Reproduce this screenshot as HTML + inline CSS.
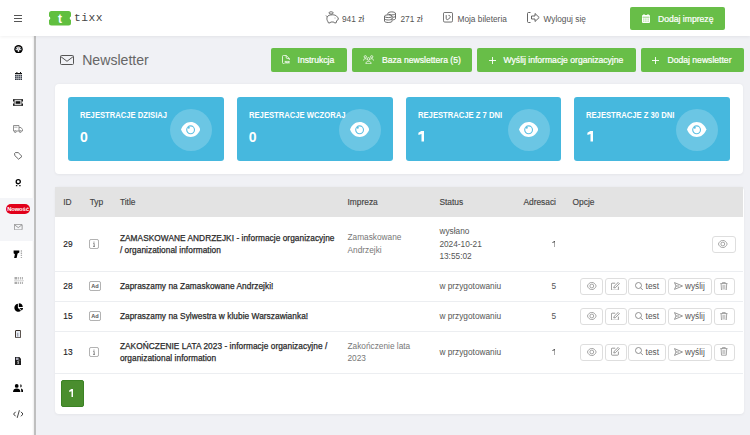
<!DOCTYPE html>
<html><head><meta charset="utf-8">
<style>
*{box-sizing:border-box;margin:0;padding:0}
html,body{width:750px;height:435px;overflow:hidden;background:#f0f1f5;font-family:"Liberation Sans",sans-serif;color:#333}
.abs{position:absolute}
#top{position:absolute;left:0;top:0;width:750px;height:36px;background:#fff;box-shadow:0 1px 3px rgba(0,0,0,.06);z-index:3}
#side{position:absolute;left:0;top:36px;width:36px;height:399px;background:#fff;border-right:2px solid #bfbfbf;box-shadow:inset -2px 0 2px -1px rgba(0,0,0,.07);z-index:2}
.gbtn{position:absolute;background:#68be48;border-radius:2px;color:#fff;font-weight:normal;font-size:8.6px;-webkit-text-stroke:.22px #fff;white-space:nowrap}
.gbtn span{position:absolute;top:.8px;line-height:23px}
.tnav{position:absolute;font-size:8.3px;color:#555;white-space:nowrap;line-height:10px}
.card{position:absolute;background:#fff;border-radius:4px;box-shadow:0 .5px 2.5px rgba(0,0,0,.05)}
.stat{position:absolute;top:13px;width:155.8px;height:64px;background:#46b8de;border-radius:3px;color:#fff}
.stat .l{position:absolute;left:12px;top:13px;font-size:8.6px;font-weight:bold;white-space:nowrap;transform:scaleX(.89);transform-origin:0 0}
.stat .v{position:absolute;left:12px;top:32px;font-size:14px;font-weight:bold}
.stat .c{position:absolute;left:102px;top:12px;width:42px;height:42px;border-radius:50%;background:rgba(255,255,255,.2)}
.stat svg{position:absolute;left:11px;top:13px}
.th{position:absolute;top:.5px;line-height:29px;font-size:8.4px;color:#444;-webkit-text-stroke:.15px #444;white-space:nowrap}
.td{position:absolute;font-size:8.3px;color:#555;white-space:nowrap;line-height:12.4px}
.tt{position:absolute;font-size:8.3px;color:#2a2a2a;-webkit-text-stroke:.25px #2a2a2a;letter-spacing:.05px;white-space:nowrap;line-height:12.4px}
.hr{position:absolute;left:0;width:688px;height:1px;background:#eceef1}
.ob{position:absolute;height:17px;border:1px solid #dedede;border-radius:3px;background:#fff;font-size:8.3px;color:#555;white-space:nowrap}
.ob svg{position:absolute}
.ob span{position:absolute;line-height:15px}
.si{position:absolute;left:0;width:34px}
</style></head><body>

<div id="top">
  <!-- hamburger -->
  <div class="abs" style="left:14px;top:14.5px;width:8px;height:1.2px;background:#555"></div>
  <div class="abs" style="left:14px;top:17.5px;width:8px;height:1.2px;background:#555"></div>
  <div class="abs" style="left:14px;top:20.5px;width:8px;height:1.2px;background:#555"></div>
  <!-- logo -->
  <svg class="abs" style="left:49px;top:11px" width="22" height="14.5" viewBox="0 0 22 14.5">
    <path d="M2.5 0H19.5A2.5 2.5 0 0 1 22 2.5V5.6A1.7 1.7 0 0 0 22 8.9V12A2.5 2.5 0 0 1 19.5 14.5H2.5A2.5 2.5 0 0 1 0 12V8.9A1.7 1.7 0 0 0 0 5.6V2.5A2.5 2.5 0 0 1 2.5 0Z" fill="#60bf3f"/>
    <text x="10.9" y="11.6" font-family="Liberation Sans" font-weight="bold" font-size="12" fill="#fff" text-anchor="middle">t</text>
  </svg>
  <div class="abs" style="left:74px;top:10.5px;font-family:'Liberation Mono',monospace;font-size:11.3px;letter-spacing:.45px;color:#444;line-height:15px">tixx</div>

  <!-- nav -->
  <svg class="abs" style="left:324.5px;top:10.5px" width="14" height="13" viewBox="0 0 14 13" fill="none" stroke="#555" stroke-width=".85">
    <path d="M2.2 5.8C3 4.5 5 3.8 7.4 3.8C9.4 3.8 10.8 4.3 11.6 5.3L13.2 6.7V8.6L11.8 9.5L11.1 11.9H9.4L8.8 11H5.7L5.1 11.9H3.4L2.7 10.1C1.9 9.2 1.6 7.6 2.2 5.8ZM2.2 5.8L1 4.5"/>
    <ellipse cx="6.1" cy="1.9" rx="2.1" ry="1.15"/>
    <circle cx="10" cy="7" r=".45" fill="#555" stroke="none"/>
  </svg>
  <div class="tnav" style="left:342px;top:13.5px">941 zł</div>
  <svg class="abs" style="left:384px;top:11px" width="12" height="12" viewBox="0 0 12 12" fill="none" stroke="#555" stroke-width=".85">
    <path d="M3.9 2.4C3.9 1.6 5.6 .9 7.7 .9S11.5 1.6 11.5 2.4 9.8 3.9 7.7 3.9C6.6 3.9 5.6 3.7 5 3.4M11.5 2.4V7.6C11.5 8.2 10.5 8.7 8.9 8.9M11.5 5C11.5 5.6 10.5 6.1 8.9 6.3M3.9 2.4V3.6"/>
    <ellipse cx="4.3" cy="5.2" rx="3.8" ry="1.4"/><path d="M.5 5.2V10.1C.5 10.9 2.2 11.5 4.3 11.5S8.1 10.9 8.1 10.1V5.2M.5 7.6C.5 8.4 2.2 9 4.3 9S8.1 8.4 8.1 7.6"/>
  </svg>
  <div class="tnav" style="left:400.5px;top:13.5px">271 zł</div>
  <svg class="abs" style="left:443px;top:12px" width="10" height="10.5" viewBox="0 0 10 10.5" fill="none" stroke="#555" stroke-width=".85">
    <rect x=".45" y=".45" width="9.1" height="9.6" rx="1.3"/><path d="M3.2 3.1V6.2C3 7.6 4.2 8 5 7.4L7.1 5.7C7.7 4.6 7 3.3 5.5 3.4"/>
  </svg>
  <div class="tnav" style="left:457.5px;top:13.5px">Moja bileteria</div>
  <svg class="abs" style="left:527px;top:11.5px" width="13" height="11" viewBox="0 0 13 11" fill="none" stroke="#555" stroke-width="0.9">
    <path d="M3.5 .5H1.5A1 1 0 0 0 .5 1.5V9.5A1 1 0 0 0 1.5 10.5H3.5"/><path d="M4.5 4H8V1.5L12.2 5.5L8 9.5V7H4.5Z"/>
  </svg>
  <div class="tnav" style="left:543.5px;top:13.5px">Wyloguj się</div>

  <div class="gbtn" style="left:630px;top:6.5px;width:94.5px;height:23.5px">
    <svg class="abs" style="left:12px;top:7.5px" width="8" height="9" viewBox="0 0 8 9"><path d="M1.5 0H2.5V1H5.5V0H6.5V1H7A1 1 0 0 1 8 2V8A1 1 0 0 1 7 9H1A1 1 0 0 1 0 8V2A1 1 0 0 1 1 1H1.5Z" fill="#fff"/><path d="M.5 3.2H7.5" stroke="#68be48" stroke-width=".7"/><path d="M1 5.1H7M1 7.1H7" stroke="#68be48" stroke-width=".6" stroke-dasharray="1.2 .5"/></svg>
    <span style="left:28px;line-height:24px">Dodaj imprezę</span>
  </div>
</div>

<div id="side">
  <!-- gauge -->
  <svg class="abs" style="left:13.8px;top:8.7px" width="9" height="8.4" viewBox="0 0 9 8.4"><circle cx="4.5" cy="4.2" r="4.2" fill="#000"/><path d="M1.6 4.4A2.9 2.9 0 0 1 7.4 4.4V5.2H1.6Z" fill="#e6e6e6"/><circle cx="2.3" cy="3.6" r=".65" fill="#123"/><circle cx="6.7" cy="3.6" r=".65" fill="#123"/><circle cx="3.1" cy="2.1" r=".5" fill="#543"/><circle cx="5.9" cy="2.1" r=".5" fill="#321"/><path d="M4.2 6.2L4.3 1.2H4.7L4.8 6.2Z" fill="#889"/><path d="M1.5 5.2Q4.5 7.6 7.5 5.2V6.4H1.5Z" fill="#000"/><circle cx="4.5" cy="5.9" r=".85" fill="#fff"/></svg>
  <!-- calendar -->
  <svg class="abs" style="left:14.6px;top:35.6px" width="7.4" height="8.2" viewBox="0 0 7.4 8.2"><path d="M1.4 0H2.4V1H5V0H6V1H7.4V2.3H0V1H1.4Z" fill="#111"/><rect x="0" y="2.9" width="7.4" height="5.3" rx=".4" fill="#2c3442"/><path d="M1.85 2.9V8.2M3.7 2.9V8.2M5.55 2.9V8.2M0 4.65H7.4M0 6.45H7.4" stroke="#e8e8e8" stroke-width=".55"/></svg>
  <!-- ticket -->
  <svg class="abs" style="left:13.4px;top:62.9px" width="10" height="7" viewBox="0 0 10 7"><path d="M0 0H10V2.6A.9.9 0 0 0 10 4.4V7H0V4.4A.9.9 0 0 0 0 2.6Z" fill="#555"/><circle cx=".9" cy="1.2" r=".8" fill="#000"/><circle cx=".9" cy="5.8" r=".8" fill="#000"/><circle cx="9.1" cy="1.2" r=".8" fill="#000"/><circle cx="9.1" cy="5.8" r=".8" fill="#000"/><rect x="1.6" y="1" width="6.8" height="5" fill="#d0d0d0"/><rect x="2.7" y="2.2" width="4.6" height="2.6" rx=".3" fill="#111"/></svg>
  <!-- truck -->
  <svg class="abs" style="left:13.4px;top:89.4px" width="10" height="8" viewBox="0 0 10 8" fill="none" stroke="#777" stroke-width=".8"><path d="M.5 .5H6V6H.5Z"/><path d="M6 2.5H8L9.5 4.5V6H6"/><circle cx="2.3" cy="6.7" r=".9" fill="#fff"/><circle cx="7.3" cy="6.7" r=".9" fill="#fff"/><path d="M1.2 2.2H4.5" stroke="#999"/></svg>
  <!-- tag -->
  <svg class="abs" style="left:13.9px;top:116.1px" width="8.5" height="7.5" viewBox="0 0 8.5 7.5" fill="none" stroke="#444" stroke-width=".8"><path d="M.6 1.4L1.4 .6L4.2 .6L8 4.4L4.6 7.2L.8 3.6Z"/></svg>
  <!-- award person -->
  <svg class="abs" style="left:14.9px;top:143px" width="6.5" height="7.5" viewBox="0 0 6.5 7.5"><circle cx="3.25" cy="2.7" r="2.05" fill="none" stroke="#000" stroke-width="1.3"/><path d="M.9 6.7H2.3M4.2 6.7H5.6" stroke="#111" stroke-width="1.2"/></svg>
  <!-- active item -->
  <div class="abs" style="left:0;top:162px;width:34px;height:42.7px;background:#f4f5f8"></div>
  <div class="abs" style="left:5.8px;top:167.8px;width:24.4px;height:10.3px;border-radius:5.2px;background:#e1001a;color:#fff;font-size:5.9px;font-weight:bold;line-height:10.3px;text-align:center;letter-spacing:-.15px">Nowość</div>
  <svg class="abs" style="left:14px;top:188px" width="8.5" height="6.3" viewBox="0 0 8.5 6.3" fill="none" stroke="#777" stroke-width=".7"><rect x=".35" y=".35" width="7.8" height="5.6" rx=".6"/><path d="M.6 .9L4.25 3.6L7.9 .9"/></svg>
  <!-- gun/registers -->
  <svg class="abs" style="left:13px;top:213.9px" width="10" height="8.2" viewBox="0 0 10 8.2"><path d="M.6 .5H6.3V2.6L4.6 3.6L3.6 7.9H1.1L1.9 4.3L.6 3.2Z" fill="#000"/><path d="M8.4 .3V8" stroke="#aaa" stroke-width="1.3" stroke-dasharray="1.4 .8"/></svg>
  <!-- barcode -->
  <svg class="abs" style="left:13.5px;top:241px" width="10" height="7.4" viewBox="0 0 10 7.4"><path d="M.5 0H3.3V2.6H.5ZM4.2 0H5.1V2.6H4.2ZM6.1 0H7.2V2.6H6.1ZM8.1 0H9V2.6H8.1ZM.5 4.8H3.3V7.4H.5ZM4.2 4.8H5.1V7.4H4.2ZM6.1 4.8H7.2V7.4H6.1ZM8.1 4.8H9V7.4H8.1Z" fill="#aaa"/><path d="M0 3.7H10" stroke="#bbb" stroke-width=".6"/></svg>
  <!-- pie -->
  <svg class="abs" style="left:13.9px;top:267px" width="9.4" height="8.6" viewBox="0 0 9.4 8.6"><path d="M3.9 .8A4 4 0 1 0 7 7.8L4.3 5.2A.8.8 0 0 1 3.9 4.6Z" fill="#000"/><path d="M4.8 .2A4 4 0 0 1 8.8 4H4.8Z" fill="#000"/><path d="M5.4 5H9.2A4.3 4.3 0 0 1 7.7 7.4Z" fill="#111"/></svg>
  <!-- calculator -->
  <svg class="abs" style="left:14.8px;top:294px" width="6.2" height="8.3" viewBox="0 0 6.2 8.3"><rect x=".5" y=".5" width="5.2" height="7.3" rx=".4" fill="#e8eef4" stroke="#3a2f28" stroke-width="1"/><path d="M2.8 2.8V6.6" stroke="#889" stroke-width="1"/></svg>
  <!-- file dollar -->
  <svg class="abs" style="left:14.8px;top:320.7px" width="6.2" height="8.2" viewBox="0 0 6.2 8.2"><path d="M0 0H4.3L6.2 1.9V8.2H0Z" fill="#1a1a1a"/><path d="M.9 .6H3.6V3H.9Z" fill="#aab"/><path d="M4.2 3.2H5.5" stroke="#999" stroke-width=".6"/><path d="M3.9 4.2C3.5 3.9 2.5 4 2.5 4.6S3.9 5.2 3.9 5.9 3 6.6 2.4 6.3M3.15 3.6V7.1" stroke="#ddd" stroke-width=".6" fill="none"/></svg>
  <!-- users -->
  <svg class="abs" style="left:13px;top:347.7px" width="10.3" height="8.1" viewBox="0 0 10.3 8.1"><circle cx="3.7" cy="1.9" r="1.9" fill="#000"/><path d="M0 8.1C0 5.5 1.5 4.4 3.7 4.4S7.4 5.5 7.4 8.1Z" fill="#000"/><path d="M7.4 .3A1.7 1.7 0 0 1 7.4 3.6Z" fill="#000"/><path d="M7.9 4.6C9.3 4.9 10.3 6 10.3 8.1H8.3C8.3 6.5 8.2 5.4 7.9 4.6Z" fill="#000"/></svg>
  <!-- code -->
  <svg class="abs" style="left:12.8px;top:374.3px" width="10.6" height="8.1" viewBox="0 0 10.6 8.1" fill="none" stroke="#222" stroke-width=".9"><path d="M2.6 1.8L.6 4.05L2.6 6.3M8 1.8L10 4.05L8 6.3"/><path d="M6.4 .2L4.2 7.9" stroke="#333"/></svg>
</div>

<!-- Title -->
<svg class="abs" style="left:60px;top:55px" width="14" height="10" viewBox="0 0 14 10" fill="none" stroke="#555" stroke-width="1">
  <rect x=".5" y=".5" width="13" height="9" rx="1"/><path d="M.8 1.6L7 6.3L13.2 1.6"/>
</svg>
<div class="abs" style="left:82.2px;top:51.6px;font-size:14.1px;letter-spacing:0;color:#666;line-height:17px;white-space:nowrap">Newsletter</div>

<div class="gbtn" style="left:270.5px;top:48px;width:76px;height:23.5px">
  <svg class="abs" style="left:11.3px;top:7px" width="8.2" height="9" viewBox="0 0 8.2 9" fill="none" stroke="#fff" stroke-width=".8"><path d="M4.2.4H1.6A1.1 1.1 0 0 0 .5 1.5V7.5A1.1 1.1 0 0 0 1.6 8.6H2.4M4.2.4L7.3 3.5V5M4.2.4V2.3A1.2 1.2 0 0 0 5.4 3.5H7.3"/><path d="M2.6 5.9H7.8V8.5H2.6Z" fill="#fff" fill-opacity=".55" stroke="none"/><path d="M3 6.6H4.1V8M4.8 6.6V8H5.6M6.3 8V6.6H7.4M6.3 7.3H7" stroke="#fff" stroke-width=".45"/></svg>
  <span style="left:27px">Instrukcja</span>
</div>
<div class="gbtn" style="left:351.5px;top:48px;width:120.5px;height:23.5px">
  <svg class="abs" style="left:11.3px;top:6.8px" width="11" height="9.2" viewBox="0 0 11 9.2" fill="none" stroke="#fff" stroke-width=".75"><circle cx="5.5" cy="3.9" r="1.3"/><path d="M2.9 8.8C2.9 7 4 6.3 5.5 6.3S8.1 7 8.1 8.8Z"/><circle cx="2.3" cy="1.8" r="1.15"/><circle cx="8.7" cy="1.8" r="1.15"/><path d="M.4 5.6C.6 4.4 1.3 3.7 2.3 3.7S3.5 4 3.9 4.5M10.6 5.6C10.4 4.4 9.7 3.7 8.7 3.7S7.5 4 7.1 4.5"/></svg>
  <span style="left:30.5px">Baza newslettera (5)</span>
</div>
<div class="gbtn" style="left:476.5px;top:48px;width:159px;height:23.5px">
  <svg class="abs" style="left:12px;top:8.5px" width="7" height="7" viewBox="0 0 7 7" stroke="#fff" stroke-width=".9"><path d="M3.5 0V7M0 3.5H7"/></svg>
  <span style="left:27px">Wyślij informacje organizacyjne</span>
</div>
<div class="gbtn" style="left:640.5px;top:48px;width:103px;height:23.5px">
  <svg class="abs" style="left:11.5px;top:8.5px" width="7" height="7" viewBox="0 0 7 7" stroke="#fff" stroke-width=".9"><path d="M3.5 0V7M0 3.5H7"/></svg>
  <span style="left:27px">Dodaj newsletter</span>
</div>

<!-- stats card -->
<div class="card" style="left:55px;top:84px;width:688px;height:90px">
  <div class="stat" style="left:13px"><div class="l">REJESTRACJE DZISIAJ</div><div class="v">0</div><div class="c"><svg width="19.4" height="15" viewBox="0 0 19.4 15"><path d="M0 7.5C2 2.7 5.4 0 9.7 0S17.4 2.7 19.4 7.5C17.4 12.3 14 15 9.7 15S2 12.3 0 7.5Z" fill="#fff"/><circle cx="9.6" cy="7.8" r="3.9" fill="none" stroke="#5ec0e3" stroke-width="1.1"/><circle cx="7.8" cy="5.7" r="1" fill="#5ec0e3"/></svg></div></div>
  <div class="stat" style="left:181.8px"><div class="l">REJESTRACJE WCZORAJ</div><div class="v">0</div><div class="c"><svg width="19.4" height="15" viewBox="0 0 19.4 15"><path d="M0 7.5C2 2.7 5.4 0 9.7 0S17.4 2.7 19.4 7.5C17.4 12.3 14 15 9.7 15S2 12.3 0 7.5Z" fill="#fff"/><circle cx="9.6" cy="7.8" r="3.9" fill="none" stroke="#5ec0e3" stroke-width="1.1"/><circle cx="7.8" cy="5.7" r="1" fill="#5ec0e3"/></svg></div></div>
  <div class="stat" style="left:350.6px"><div class="l">REJESTRACJE Z 7 DNI</div><svg class="abs" style="left:12.4px;top:34.3px" width="6" height="10.6" viewBox="0 0 6 10.6"><path d="M3.5 0H6V10.6H3.5V2.9L.4 3.9V1.8L3.3 0Z" fill="#fff"/></svg><div class="c"><svg width="19.4" height="15" viewBox="0 0 19.4 15"><path d="M0 7.5C2 2.7 5.4 0 9.7 0S17.4 2.7 19.4 7.5C17.4 12.3 14 15 9.7 15S2 12.3 0 7.5Z" fill="#fff"/><circle cx="9.6" cy="7.8" r="3.9" fill="none" stroke="#5ec0e3" stroke-width="1.1"/><circle cx="7.8" cy="5.7" r="1" fill="#5ec0e3"/></svg></div></div>
  <div class="stat" style="left:519.4px"><div class="l">REJESTRACJE Z 30 DNI</div><svg class="abs" style="left:12.4px;top:34.3px" width="6" height="10.6" viewBox="0 0 6 10.6"><path d="M3.5 0H6V10.6H3.5V2.9L.4 3.9V1.8L3.3 0Z" fill="#fff"/></svg><div class="c"><svg width="19.4" height="15" viewBox="0 0 19.4 15"><path d="M0 7.5C2 2.7 5.4 0 9.7 0S17.4 2.7 19.4 7.5C17.4 12.3 14 15 9.7 15S2 12.3 0 7.5Z" fill="#fff"/><circle cx="9.6" cy="7.8" r="3.9" fill="none" stroke="#5ec0e3" stroke-width="1.1"/><circle cx="7.8" cy="5.7" r="1" fill="#5ec0e3"/></svg></div></div>
</div>

<!-- table card -->
<div class="card" id="tbl" style="left:55px;top:187px;width:688.5px;height:226.8px">
  <div class="abs" style="left:0;top:0;width:688px;height:29.5px;background:#e3e3e3"></div>
  <div class="th" style="left:8.3px">ID</div>
  <div class="th" style="left:34.7px">Typ</div>
  <div class="th" style="left:64.9px">Title</div>
  <div class="th" style="left:292.5px">Impreza</div>
  <div class="th" style="left:384.4px">Status</div>
  <div class="th" style="left:468.4px">Adresaci</div>
  <div class="th" style="left:517.6px">Opcje</div>

  <div class="hr" style="top:84px"></div>
  <div class="hr" style="top:113.6px"></div>
  <div class="hr" style="top:144px"></div>
  <div class="hr" style="top:185.6px"></div>

  <div class="td" style="left:8.3px;top:50.8px;color:#222;-webkit-text-stroke:.15px #222">29</div>
  <svg class="abs" style="left:34px;top:51.8px" width="10" height="10" viewBox="0 0 10 10"><rect x=".45" y=".45" width="9.1" height="9.1" rx="1.6" fill="none" stroke="#999" stroke-width=".8"/><circle cx="5" cy="3" r=".55" fill="#777"/><path d="M4.2 4.4H5.2V7.3M4 7.4H6" stroke="#666" stroke-width=".75" fill="none"/></svg>
  <div class="tt" style="left:64.9px;top:44.5px">ZAMASKOWANE ANDRZEJKI - informacje organizacyjne<br>/ organizational information</div>
  <div class="td" style="left:292.5px;top:44.3px;color:#777">Zamaskowane<br>Andrzejki</div>
  <div class="td" style="left:384.4px;top:38.4px">wysłano<br>2024-10-21<br>13:55:02</div>
  <svg class="abs" style="left:496.8px;top:53.8px" width="3.4" height="6.2" viewBox="0 0 3.4 6.2"><path d="M2.5 0H3.4V6.2H2.5V1.2L.3 2V1.2L2.3 0Z" fill="#555"/></svg>
  <div class="ob" style="left:657px;top:49px;width:23.6px"><div class="abs" style="left:5.4px;top:3.2px"><svg width="9.6" height="8" viewBox="0 0 9.6 8" fill="none" stroke="#777" stroke-width=".65"><path d="M.4 4C1.3 1.7 2.9.4 4.8.4S8.3 1.7 9.2 4C8.3 6.3 6.7 7.6 4.8 7.6S1.3 6.3.4 4Z"/><circle cx="4.8" cy="4" r="1.9"/></svg></div></div>

  <div class="td" style="left:8.3px;top:92.8px;color:#222;-webkit-text-stroke:.15px #222">28</div>
  <svg class="abs" style="left:34px;top:94.1px" width="12" height="10" viewBox="0 0 12 10"><rect x=".45" y=".45" width="11.1" height="9.1" rx="1.6" fill="none" stroke="#999" stroke-width=".8"/><text x="6" y="7.2" text-anchor="middle" font-family="Liberation Sans" font-size="5.6" font-weight="bold" fill="#555">Ad</text></svg>
  <div class="tt" style="left:64.9px;top:92.8px">Zapraszamy na Zamaskowane Andrzejki!</div>
  <div class="td" style="left:384.4px;top:92.8px">w przygotowaniu</div>
  <div class="td" style="left:450px;width:51px;text-align:right;top:92.8px">5</div>
  <div class="ob" style="left:525.4px;top:91.2px;width:22.8px"><div class="abs" style="left:5.8px;top:2.8px"><svg width="9.6" height="8" viewBox="0 0 9.6 8" fill="none" stroke="#777" stroke-width=".65"><path d="M.4 4C1.3 1.7 2.9.4 4.8.4S8.3 1.7 9.2 4C8.3 6.3 6.7 7.6 4.8 7.6S1.3 6.3.4 4Z"/><circle cx="4.8" cy="4" r="1.9"/></svg></div></div><div class="ob" style="left:550px;top:91.2px;width:21.8px"><div class="abs" style="left:5.4px;top:2.6px"><svg width="9" height="8.6" viewBox="0 0 9 8.6" fill="none" stroke="#777" stroke-width=".75"><path d="M4.2 1.2H1.2A.8.8 0 0 0 .4 2V7.4A.8.8 0 0 0 1.2 8.2H6.6A.8.8 0 0 0 7.4 7.4V4.6"/><path d="M7.2.5L8.4 1.7L4.4 5.7L2.8 6L3.1 4.4Z"/></svg></div></div><div class="ob" style="left:573.4px;top:91.2px;width:37.4px"><div class="abs" style="left:5.6px;top:2.6px"><svg width="8.4" height="8.6" viewBox="0 0 8.4 8.6" fill="none" stroke="#777" stroke-width=".8"><circle cx="3.5" cy="3.5" r="3"/><path d="M5.7 5.8L8 8.2"/></svg></div><span style="left:16.2px">test</span></div><div class="ob" style="left:613.2px;top:91.2px;width:43.8px"><div class="abs" style="left:5px;top:3px"><svg width="9" height="8" viewBox="0 0 9 8" fill="none" stroke="#777" stroke-width=".75"><path d="M.5 .6L8.5 4L.5 7.4L2 4Z"/><path d="M2 4H5"/></svg></div><span style="left:15.8px">wyślij</span></div><div class="ob" style="left:659px;top:91.2px;width:20.9px"><div class="abs" style="left:5.4px;top:2.6px"><svg width="7.8" height="8.6" viewBox="0 0 7.8 8.6" fill="none" stroke="#888" stroke-width=".75"><path d="M.3 1.6H7.5M2.6 1.6V.4H5.2V1.6M1.1 1.6L1.5 8.2H6.3L6.7 1.6"/><path d="M2.9 3V7M3.9 3V7M4.9 3V7" stroke-width=".5"/></svg></div></div>

  <div class="td" style="left:8.3px;top:122.8px;color:#222;-webkit-text-stroke:.15px #222">15</div>
  <svg class="abs" style="left:34px;top:124.1px" width="12" height="10" viewBox="0 0 12 10"><rect x=".45" y=".45" width="11.1" height="9.1" rx="1.6" fill="none" stroke="#999" stroke-width=".8"/><text x="6" y="7.2" text-anchor="middle" font-family="Liberation Sans" font-size="5.6" font-weight="bold" fill="#555">Ad</text></svg>
  <div class="tt" style="left:64.9px;top:122.8px">Zapraszamy na Sylwestra w klubie Warszawianka!</div>
  <div class="td" style="left:384.4px;top:122.8px">w przygotowaniu</div>
  <div class="td" style="left:450px;width:51px;text-align:right;top:122.8px">5</div>
  <div class="ob" style="left:525.4px;top:121.2px;width:22.8px"><div class="abs" style="left:5.8px;top:2.8px"><svg width="9.6" height="8" viewBox="0 0 9.6 8" fill="none" stroke="#777" stroke-width=".65"><path d="M.4 4C1.3 1.7 2.9.4 4.8.4S8.3 1.7 9.2 4C8.3 6.3 6.7 7.6 4.8 7.6S1.3 6.3.4 4Z"/><circle cx="4.8" cy="4" r="1.9"/></svg></div></div><div class="ob" style="left:550px;top:121.2px;width:21.8px"><div class="abs" style="left:5.4px;top:2.6px"><svg width="9" height="8.6" viewBox="0 0 9 8.6" fill="none" stroke="#777" stroke-width=".75"><path d="M4.2 1.2H1.2A.8.8 0 0 0 .4 2V7.4A.8.8 0 0 0 1.2 8.2H6.6A.8.8 0 0 0 7.4 7.4V4.6"/><path d="M7.2.5L8.4 1.7L4.4 5.7L2.8 6L3.1 4.4Z"/></svg></div></div><div class="ob" style="left:573.4px;top:121.2px;width:37.4px"><div class="abs" style="left:5.6px;top:2.6px"><svg width="8.4" height="8.6" viewBox="0 0 8.4 8.6" fill="none" stroke="#777" stroke-width=".8"><circle cx="3.5" cy="3.5" r="3"/><path d="M5.7 5.8L8 8.2"/></svg></div><span style="left:16.2px">test</span></div><div class="ob" style="left:613.2px;top:121.2px;width:43.8px"><div class="abs" style="left:5px;top:3px"><svg width="9" height="8" viewBox="0 0 9 8" fill="none" stroke="#777" stroke-width=".75"><path d="M.5 .6L8.5 4L.5 7.4L2 4Z"/><path d="M2 4H5"/></svg></div><span style="left:15.8px">wyślij</span></div><div class="ob" style="left:659px;top:121.2px;width:20.9px"><div class="abs" style="left:5.4px;top:2.6px"><svg width="7.8" height="8.6" viewBox="0 0 7.8 8.6" fill="none" stroke="#888" stroke-width=".75"><path d="M.3 1.6H7.5M2.6 1.6V.4H5.2V1.6M1.1 1.6L1.5 8.2H6.3L6.7 1.6"/><path d="M2.9 3V7M3.9 3V7M4.9 3V7" stroke-width=".5"/></svg></div></div>

  <div class="td" style="left:8.3px;top:158.8px;color:#222;-webkit-text-stroke:.15px #222">13</div>
  <svg class="abs" style="left:34px;top:159.8px" width="10" height="10" viewBox="0 0 10 10"><rect x=".45" y=".45" width="9.1" height="9.1" rx="1.6" fill="none" stroke="#999" stroke-width=".8"/><circle cx="5" cy="3" r=".55" fill="#777"/><path d="M4.2 4.4H5.2V7.3M4 7.4H6" stroke="#666" stroke-width=".75" fill="none"/></svg>
  <div class="tt" style="left:64.9px;top:152.6px">ZAKOŃCZENIE LATA 2023 - informacje organizacyjne /<br>organizational information</div>
  <div class="td" style="left:292.5px;top:152.6px;color:#777">Zakończenie lata<br>2023</div>
  <div class="td" style="left:384.4px;top:158.8px">w przygotowaniu</div>
  <svg class="abs" style="left:496.8px;top:161.8px" width="3.4" height="6.2" viewBox="0 0 3.4 6.2"><path d="M2.5 0H3.4V6.2H2.5V1.2L.3 2V1.2L2.3 0Z" fill="#555"/></svg>
  <div class="ob" style="left:525.4px;top:156.8px;width:22.8px"><div class="abs" style="left:5.8px;top:2.8px"><svg width="9.6" height="8" viewBox="0 0 9.6 8" fill="none" stroke="#777" stroke-width=".65"><path d="M.4 4C1.3 1.7 2.9.4 4.8.4S8.3 1.7 9.2 4C8.3 6.3 6.7 7.6 4.8 7.6S1.3 6.3.4 4Z"/><circle cx="4.8" cy="4" r="1.9"/></svg></div></div><div class="ob" style="left:550px;top:156.8px;width:21.8px"><div class="abs" style="left:5.4px;top:2.6px"><svg width="9" height="8.6" viewBox="0 0 9 8.6" fill="none" stroke="#777" stroke-width=".75"><path d="M4.2 1.2H1.2A.8.8 0 0 0 .4 2V7.4A.8.8 0 0 0 1.2 8.2H6.6A.8.8 0 0 0 7.4 7.4V4.6"/><path d="M7.2.5L8.4 1.7L4.4 5.7L2.8 6L3.1 4.4Z"/></svg></div></div><div class="ob" style="left:573.4px;top:156.8px;width:37.4px"><div class="abs" style="left:5.6px;top:2.6px"><svg width="8.4" height="8.6" viewBox="0 0 8.4 8.6" fill="none" stroke="#777" stroke-width=".8"><circle cx="3.5" cy="3.5" r="3"/><path d="M5.7 5.8L8 8.2"/></svg></div><span style="left:16.2px">test</span></div><div class="ob" style="left:613.2px;top:156.8px;width:43.8px"><div class="abs" style="left:5px;top:3px"><svg width="9" height="8" viewBox="0 0 9 8" fill="none" stroke="#777" stroke-width=".75"><path d="M.5 .6L8.5 4L.5 7.4L2 4Z"/><path d="M2 4H5"/></svg></div><span style="left:15.8px">wyślij</span></div><div class="ob" style="left:659px;top:156.8px;width:20.9px"><div class="abs" style="left:5.4px;top:2.6px"><svg width="7.8" height="8.6" viewBox="0 0 7.8 8.6" fill="none" stroke="#888" stroke-width=".75"><path d="M.3 1.6H7.5M2.6 1.6V.4H5.2V1.6M1.1 1.6L1.5 8.2H6.3L6.7 1.6"/><path d="M2.9 3V7M3.9 3V7M4.9 3V7" stroke-width=".5"/></svg></div></div>

  <div class="abs" style="left:5.8px;top:193px;width:23.2px;height:27.4px;background:#4a8e2e;border:1px solid #3b8224;border-radius:2px;color:#fff;font-weight:bold;font-size:10px;line-height:25.4px;text-align:center"><svg class="abs" style="left:7.3px;top:8px" width="4.4" height="8.1" viewBox="0 0 4.4 8.1"><path d="M2.5 0H4.4V8.1H2.5V2.2L.2 3V1.4L2.3 0Z" fill="#fff"/></svg></div>
</div>

</body></html>
